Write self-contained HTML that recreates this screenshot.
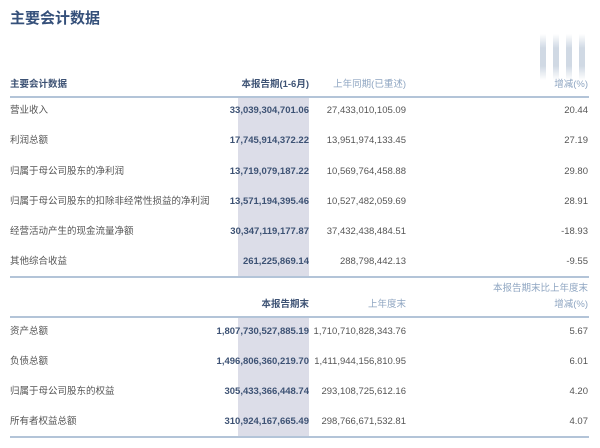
<!DOCTYPE html>
<html><head><meta charset="utf-8"><style>
body{margin:0;width:600px;height:448px;background:#fff;position:relative;overflow:hidden;font-family:"Liberation Sans","Noto Sans CJK SC",sans-serif;}
.a{position:absolute;white-space:nowrap;font-size:9.5px;color:#555;line-height:12px}
.r{text-align:right}
.b{font-weight:bold;color:#3d5274}
.h{color:#8fa6c2}
.line{position:absolute;left:10px;width:579px;height:2px;background:#b3c4d8}
.hl{position:absolute;left:238px;width:71px;background:#dcdde8}
</style></head><body>
<div class="a b" style="left:10px;top:9px;font-size:15px;line-height:20px;color:#35507a">主要会计数据</div>
<div style="position:absolute;left:540px;top:34px;width:50px;height:46px;background:repeating-linear-gradient(90deg,#c5d0de 0 6px,#fff 6px 13px);-webkit-mask:linear-gradient(#0000,#000 30%,#000 70%,#0000);opacity:.8"></div>
<div class="hl" style="top:97px;height:180px"></div>
<div class="hl" style="top:318px;height:119px"></div>
<div class="line" style="top:96px"></div>
<div class="line" style="top:276px"></div>
<div class="line" style="top:316px"></div>
<div class="line" style="top:436px"></div>
<div class="a b" style="left:10px;top:79px">主要会计数据</div>
<div class="a b r" style="right:291px;top:79px">本报告期(1-6月)</div>
<div class="a h r" style="right:194px;top:79px">上年同期(已重述)</div>
<div class="a h r" style="right:12px;top:79px">增减(%)</div>

<div class="a" style="left:10px;top:105px">营业收入</div><div class="a b r" style="right:291px;top:105px">33,039,304,701.06</div><div class="a r" style="right:194px;top:105px">27,433,010,105.09</div><div class="a r" style="right:12px;top:105px">20.44</div>
<div class="a" style="left:10px;top:135px">利润总额</div><div class="a b r" style="right:291px;top:135px">17,745,914,372.22</div><div class="a r" style="right:194px;top:135px">13,951,974,133.45</div><div class="a r" style="right:12px;top:135px">27.19</div>
<div class="a" style="left:10px;top:166px">归属于母公司股东的净利润</div><div class="a b r" style="right:291px;top:166px">13,719,079,187.22</div><div class="a r" style="right:194px;top:166px">10,569,764,458.88</div><div class="a r" style="right:12px;top:166px">29.80</div>
<div class="a" style="left:10px;top:196px">归属于母公司股东的扣除非经常性损益的净利润</div><div class="a b r" style="right:291px;top:196px">13,571,194,395.46</div><div class="a r" style="right:194px;top:196px">10,527,482,059.69</div><div class="a r" style="right:12px;top:196px">28.91</div>
<div class="a" style="left:10px;top:226px">经营活动产生的现金流量净额</div><div class="a b r" style="right:291px;top:226px">30,347,119,177.87</div><div class="a r" style="right:194px;top:226px">37,432,438,484.51</div><div class="a r" style="right:12px;top:226px">-18.93</div>
<div class="a" style="left:10px;top:256px">其他综合收益</div><div class="a b r" style="right:291px;top:256px">261,225,869.14</div><div class="a r" style="right:194px;top:256px">288,798,442.13</div><div class="a r" style="right:12px;top:256px">-9.55</div>

<div class="a h r" style="right:12px;top:283px">本报告期末比上年度末</div>
<div class="a b r" style="right:291px;top:299px">本报告期末</div>
<div class="a h r" style="right:194px;top:299px">上年度末</div>
<div class="a h r" style="right:12px;top:299px">增减(%)</div>

<div class="a" style="left:10px;top:326px">资产总额</div><div class="a b r" style="right:291px;top:326px">1,807,730,527,885.19</div><div class="a r" style="right:194px;top:326px">1,710,710,828,343.76</div><div class="a r" style="right:12px;top:326px">5.67</div>
<div class="a" style="left:10px;top:356px">负债总额</div><div class="a b r" style="right:291px;top:356px">1,496,806,360,219.70</div><div class="a r" style="right:194px;top:356px">1,411,944,156,810.95</div><div class="a r" style="right:12px;top:356px">6.01</div>
<div class="a" style="left:10px;top:386px">归属于母公司股东的权益</div><div class="a b r" style="right:291px;top:386px">305,433,366,448.74</div><div class="a r" style="right:194px;top:386px">293,108,725,612.16</div><div class="a r" style="right:12px;top:386px">4.20</div>
<div class="a" style="left:10px;top:416px">所有者权益总额</div><div class="a b r" style="right:291px;top:416px">310,924,167,665.49</div><div class="a r" style="right:194px;top:416px">298,766,671,532.81</div><div class="a r" style="right:12px;top:416px">4.07</div>
</body></html>
